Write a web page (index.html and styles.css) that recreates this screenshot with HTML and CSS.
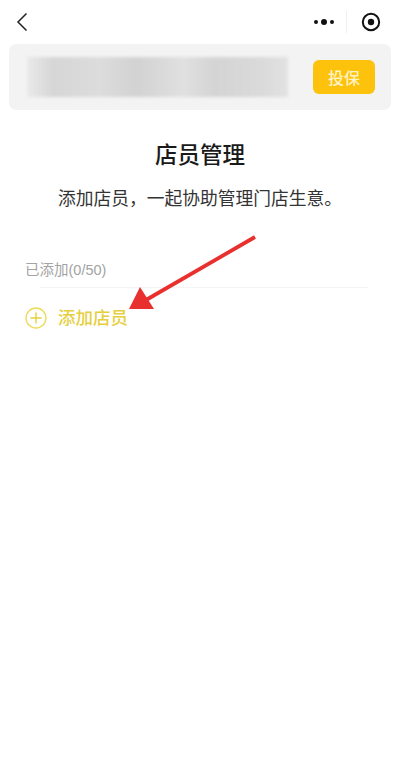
FILE: index.html
```html
<!DOCTYPE html>
<html lang="zh">
<head>
<meta charset="utf-8">
<title>店员管理</title>
<link rel="stylesheet" href="styles.css">
</head>
<body>
<div class="page">
  <header class="nav">
    <svg class="back" width="16" height="24" viewBox="0 0 16 24"><path d="M11.5 3.5 L3 12 L11.5 20.5" fill="none" stroke="#222" stroke-width="1.5"/></svg>
    <div class="capsule">
      <svg class="dots" width="22" height="8" viewBox="0 0 22 8"><circle cx="3" cy="4" r="2" fill="#111"/><circle cx="11" cy="4" r="3" fill="#111"/><circle cx="19" cy="4" r="2" fill="#111"/></svg>
      <span class="sep"></span>
      <svg class="target" width="20" height="20" viewBox="0 0 20 20"><circle cx="10" cy="10" r="8.2" fill="none" stroke="#111" stroke-width="2"/><circle cx="10" cy="10" r="3.2" fill="#111"/></svg>
    </div>
  </header>
  <section class="banner">
    <div class="blur"></div>
    <button class="cta">投保</button>
  </section>
  <h1 class="title">店员管理</h1>
  <p class="desc">添加店员，一起协助管理门店生意。</p>
  <div class="list">
    <div class="count">已添加(0/50)</div>
    <div class="rule"></div>
    <div class="add">
      <svg width="22" height="22" viewBox="0 0 22 22"><circle cx="11" cy="11" r="10" fill="none" stroke="#ecdc5c" stroke-width="1.4"/><path d="M5.5 11H16.5M11 5.5V16.5" stroke="#e6d140" stroke-width="1.4"/></svg>
      <span>添加店员</span>
    </div>
    <svg class="arrow" width="130" height="76" viewBox="0 0 130 76"><path d="M127 2 L18 65" stroke="#e8302e" stroke-width="3.8" fill="none"/><path d="M1 74 L12 52 L26 74 Z" fill="#e8302e"/></svg>
  </div>
</div>
</body>
</html>
```
FILE: styles.css
```css
* { box-sizing: border-box; }
html, body { margin: 0; padding: 0; }
body { background: #fff; font-family: "Liberation Sans", "Noto Sans CJK SC", sans-serif; }
.page { width: 400px; height: 766px; overflow: hidden; background: #fff; }
.nav { height: 44px; display: flex; align-items: center; justify-content: space-between; padding: 0 19px 0 15px; }
.back { display: block; }
.capsule { display: flex; align-items: center; }
.sep { width: 1px; height: 22px; background: #efefef; margin: 0 14px 0 11px; }
.banner { margin: 0 9px; height: 66px; background: #f3f3f3; border-radius: 7px; display: flex; align-items: center; justify-content: space-between; padding: 0 16px 0 18px; }
.blur { width: 261px; height: 40px; background: linear-gradient(90deg, #eaeaea 0%, #d6d6d6 10%, #dcdcdc 28%, #d2d2d2 42%, #e0e0e0 60%, #d4d4d4 72%, #dadada 90%, #e2e2e2 100%); filter: blur(1.5px); }
.cta { width: 62px; height: 34px; border: 0; border-radius: 6px; background: #fdc20c; color: #fff3c4; font: 500 16px "Noto Sans CJK SC", sans-serif; padding: 0; }
.title { margin: 29px 0 0; text-align: center; font-size: 22.5px; line-height: 34px; font-weight: 500; color: #1a1a1a; }
.desc { margin: 13px 0 0; text-align: center; font-size: 17.75px; line-height: 26px; color: #333; font-weight: 400; }
.list { position: relative; margin: 48px 0 0; padding: 0 25px; }
.count { font-size: 14.5px; line-height: 20px; color: #a3a3a3; }
.rule { height: 1px; margin: 7px 7px 0 15px; background: #f4f4f4; }
.add { display: flex; align-items: center; gap: 11px; margin-top: 18px; color: #e5cf3f; font-size: 17.5px; font-weight: 500; line-height: 24px; }
.add svg { display: block; }
.arrow { position: absolute; left: 128px; top: -25px; }
```
